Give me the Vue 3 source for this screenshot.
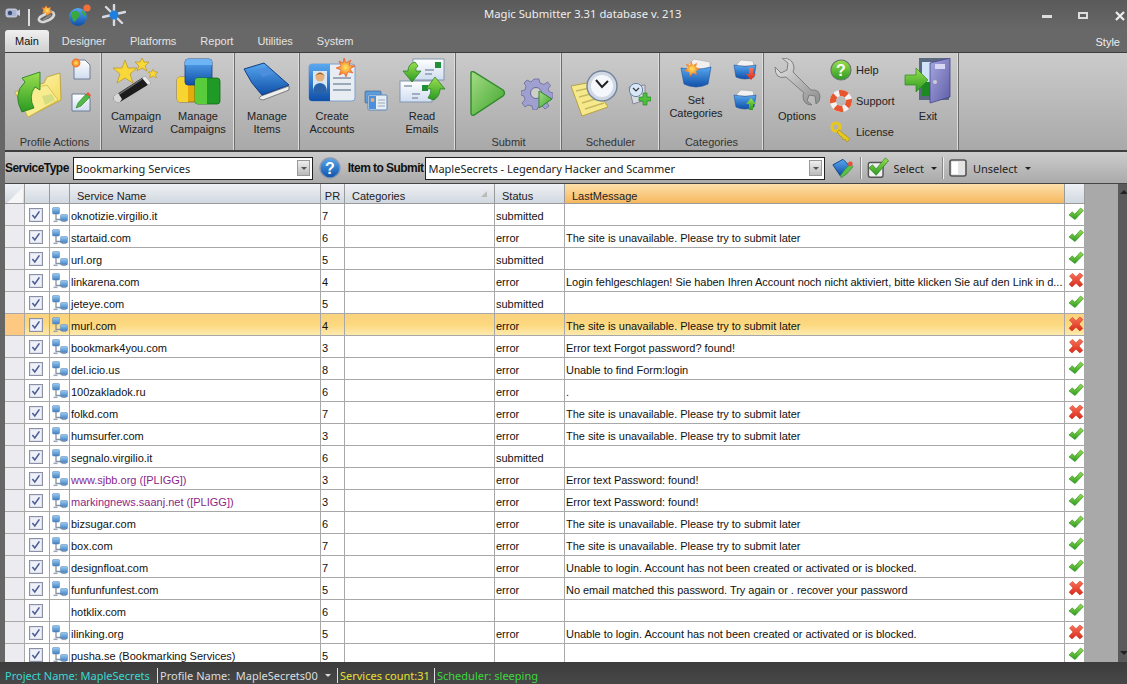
<template>
  <div class="app">
    <!-- shared icons -->
    <svg class="defs" aria-hidden="true">
      <defs>
        <linearGradient id="gGreen" x1="0" y1="0" x2="0" y2="1"><stop offset="0" stop-color="#9be04f"/><stop offset="1" stop-color="#2a9a22"/></linearGradient>
        <linearGradient id="gPlay" x1="0" y1="0" x2="1" y2="1"><stop offset="0" stop-color="#a5dc86"/><stop offset="1" stop-color="#3fa52b"/></linearGradient>
        <linearGradient id="gBlue" x1="0" y1="0" x2="0" y2="1"><stop offset="0" stop-color="#58a8f0"/><stop offset="1" stop-color="#0f4fa8"/></linearGradient>
        <linearGradient id="gNet" x1="0" y1="0" x2="0" y2="1"><stop offset="0" stop-color="#9accf2"/><stop offset="1" stop-color="#3f80c4"/></linearGradient>
        <linearGradient id="gYellow" x1="0" y1="0" x2="1" y2="1"><stop offset="0" stop-color="#fffbc8"/><stop offset="1" stop-color="#f2d64a"/></linearGradient>
        <linearGradient id="gRed" x1="0" y1="0" x2="0" y2="1"><stop offset="0" stop-color="#f9745a"/><stop offset="1" stop-color="#d92a18"/></linearGradient>
        <linearGradient id="gPaper" x1="0" y1="0" x2="0" y2="1"><stop offset="0" stop-color="#ffffff"/><stop offset="1" stop-color="#cfdcf0"/></linearGradient>
        <linearGradient id="gSteel" x1="0" y1="0" x2="1" y2="1"><stop offset="0" stop-color="#e8e8e8"/><stop offset="1" stop-color="#8c8c8c"/></linearGradient>
        <linearGradient id="gDoor" x1="0" y1="0" x2="1" y2="1"><stop offset="0" stop-color="#a8a8e0"/><stop offset="1" stop-color="#5e5ea8"/></linearGradient>
        <radialGradient id="gBurst"><stop offset="0" stop-color="#ffe860"/><stop offset="1" stop-color="#f0641e"/></radialGradient>
      </defs>
      <symbol id="i-ok" viewBox="0 0 16 16">
        <path d="M1 9 L4.3 5.8 L6.8 8.3 L12.6 2 L15.4 4.6 L7 13.6 Z" fill="url(#gGreen)" stroke="#2b8a25" stroke-width=".6"/>
      </symbol>
      <symbol id="i-x" viewBox="0 0 16 16">
        <path d="M1.5 4 L4.6 1.4 L8 4.8 L11.8 1 L15 3.6 L11 8 L14.8 12.4 L11.8 15 L8 11.2 L4 15 L1 12.2 L5 8 Z" fill="url(#gRed)" stroke="#c22a16" stroke-width=".5"/>
      </symbol>
      <symbol id="i-net" viewBox="0 0 16 16">
        <path d="M4 7 V12.5 H9" fill="none" stroke="#8793a2" stroke-width="1.3"/>
        <rect x=".5" y=".5" width="7" height="6.5" rx="1" fill="url(#gNet)" stroke="#5a83b4" stroke-width=".5"/>
        <rect x="8.5" y="7.5" width="7" height="6.5" rx="1" fill="url(#gNet)" stroke="#5a83b4" stroke-width=".5"/>
        <rect x="10" y="13.6" width="4" height="1.5" fill="#9aa4b2"/>
        <rect x="1.5" y="13.6" width="4" height="1.5" fill="#9aa4b2"/>
      </symbol>
      <symbol id="i-check" viewBox="0 0 14 14">
        <rect x=".5" y=".5" width="13" height="13" fill="#dde1ee" stroke="#8b90a4"/>
        <rect x="2" y="2" width="10" height="10" fill="#eff1f8"/>
        <path d="M3.4 7 L5.8 10 L10.4 3.4" fill="none" stroke="#4e5c98" stroke-width="1.6"/>
      </symbol>
      <symbol id="i-box" viewBox="0 0 24 22">
        <path d="M4 6 L8 2 L20 3 L21 8 L4 8 Z" fill="#f2f2f2" stroke="#aaa" stroke-width=".6"/>
        <path d="M1 7 Q12 10 23 7 L21 19 Q12 23 3 19 Z" fill="url(#gBlue)" stroke="#1c4f98" stroke-width=".6"/>
      </symbol>
    </svg>

    <!-- title bar + tabs -->
    <header class="titlebar">
      <div class="qat">
        <svg class="qat-app" width="16" height="14" viewBox="0 0 16 14">
          <rect x="1" y="3" width="11" height="8" rx="2" fill="#a8b4d0" stroke="#dde" stroke-width=".8"/>
          <circle cx="5" cy="7" r="2.2" fill="#3c4a78"/>
          <path d="M12 5 L15 3.5 V10 L12 8.5 Z" fill="#c8d0e4"/>
        </svg>
        <span class="qat-sep"></span>
        <svg width="22" height="22" viewBox="0 0 22 22">
          <path d="M6 18 Q1 17 4 13 L13 8 Q18 7 18 11 Q17 14 13 16 L8 18 Z" fill="none" stroke="#d8d8d8" stroke-width="2.6"/>
          <path d="M7 16 L15 11" stroke="#8a8a8a" stroke-width="1.6"/>
          <path d="M10 1 L11.6 4 L15 3 L14 6.4 L17 8 L14 9.6 L11 12 L9.6 9 L6.4 9 L7.4 6 L5.4 3.6 L8.6 3.8 Z" fill="url(#gBurst)"/>
        </svg>
        <svg width="24" height="24" viewBox="0 0 24 24">
          <circle cx="10" cy="14" r="9" fill="url(#gBlue)"/>
          <path d="M4 9 Q9 6 11 10 Q13 14 9 15 Q8 20 5 18 Q3 13 4 9 Z M13 7 Q18 9 18 14 L15 12 Z" fill="#3aa83a"/>
          <circle cx="19" cy="5" r="3.6" fill="#f0703a"/>
        </svg>
        <svg width="24" height="22" viewBox="0 0 24 22">
          <path d="M12 1 V21 M1 13 L23 8 M4 3 L20 19" stroke="#e4e8f0" stroke-width="2.4" stroke-linecap="round" opacity=".9"/>
          <circle cx="12" cy="11" r="4.5" fill="#1f7fe0"/>
        </svg>
      </div>
      <div class="title">Magic Submitter 3.31 database v. 213</div>
      <div class="winbtns">
        <span class="win-min"></span>
        <span class="win-max"></span>
        <svg class="win-close" width="10" height="10" viewBox="0 0 10 10"><path d="M1 1 L9 9 M9 1 L1 9" stroke="#eee" stroke-width="2.2"/></svg>
      </div>
    </header>
    <nav class="tabs">
      <span v-for="t in tabs" :key="t" class="tab" :class="{ active: t === 'Main' }">{{ t }}</span>
      <span class="style-btn">Style</span>
    </nav>

    <!-- ribbon -->
    <section class="ribbon">
      <div class="group g-profile">
        <div class="body">
          <svg class="ic-folder" width="48" height="48" viewBox="0 0 48 48">
            <path d="M1 22 L30 13 L33 7 L46 3 L47 30 L14 47 Z" fill="url(#gYellow)" stroke="#b89a30" stroke-width=".8"/>
            <path d="M1 22 L33 15 L44 30 L14 47 Z" fill="#f8ec90" stroke="#c8aa38" stroke-width=".6"/>
            <path d="M28 26 L38 24 L41 30 L31 35 Z" fill="#d6dc80"/>
            <path d="M8 42 Q-2 24 11 12 L8 8 L26 2 L26 20 L21 17 Q14 26 20 38 Z" fill="url(#gGreen)" stroke="#1e7a1e" stroke-width=".8"/>
          </svg>
          <div class="stack">
            <svg width="22" height="22" viewBox="0 0 22 22">
              <path d="M4 2 H15 L20 7 V21 H4 Z" fill="url(#gPaper)" stroke="#6c7c98"/>
              <circle cx="6" cy="5" r="4.4" fill="url(#gBurst)"/>
            </svg>
            <svg width="22" height="22" viewBox="0 0 22 22">
              <path d="M2 4 H15 L20 8 V21 H2 Z" fill="url(#gPaper)" stroke="#6c7c98"/>
              <path d="M6 18 L8 13 L16 4 L20 7 L11 16 Z" fill="#52b848" stroke="#2a7a2a" stroke-width=".6"/>
              <path d="M16 4 L18 2 L21 5 L20 7 Z" fill="#e85a3c"/>
            </svg>
          </div>
        </div>
        <div class="glabel">Profile Actions</div>
      </div>

      <div class="group g-campaign">
        <div class="big">
          <svg width="48" height="48" viewBox="0 0 48 48">
            <path d="M2 38 L33 18 L39 25 L8 44 Q0 45 2 38 Z" fill="#1c1c1c"/>
            <path d="M6 37 L30 21" stroke="#777" stroke-width="1.2"/>
            <path d="M30 20 L33 18 L39 25 L36 27 Z" fill="#eaeaea"/>
            <path d="M2 38 L6 35 L10 41 L8 44 Q0 45 2 38 Z" fill="#d8d8d8"/>
            <path d="M13 2 L16 10 L25 10 L18 16 L21 25 L13 20 L5 25 L8 16 L1 10 L10 10 Z" fill="#f8d838" stroke="#b89420" stroke-width=".7"/>
            <path d="M30 0 L32 4 L37 4 L33 8 L35 13 L30 10 L25 13 L27 8 L23 4 L28 4 Z" fill="#f8d838" stroke="#b89420" stroke-width=".7"/>
            <path d="M41 11 L42.5 14 L46 14 L43.5 16.5 L44.5 20 L41 18 L37.5 20 L38.5 16.5 L36 14 L39.5 14 Z" fill="#f8d838" stroke="#b89420" stroke-width=".6"/>
          </svg>
          <span>Campaign<br>Wizard</span>
        </div>
        <div class="big">
          <svg width="48" height="48" viewBox="0 0 48 48">
            <rect x="3" y="19" width="22" height="25" rx="3" fill="#e3ac0c" stroke="#8a6a10" stroke-width=".8"/>
            <path d="M3 22 Q3 19 6 19 H14 V44 H6 Q3 44 3 41 Z" fill="#f8d430"/>
            <rect x="11" y="1" width="27" height="26" rx="3" fill="url(#gBlue)" stroke="#123f8c" stroke-width=".8"/>
            <path d="M11 4 Q11 1 14 1 H35 Q38 1 38 4 V7 H11 Z" fill="#6cb4f4"/>
            <rect x="21" y="20" width="25" height="26" rx="3" fill="#1f9a26" stroke="#116a18" stroke-width=".8"/>
            <path d="M21 23 Q21 20 24 20 H33 V46 H24 Q21 46 21 43 Z" fill="#58cc3a"/>
          </svg>
          <span>Manage<br>Campaigns</span>
        </div>
      </div>

      <div class="group g-items">
        <div class="big">
          <svg width="48" height="48" viewBox="0 0 48 48">
            <path d="M18 38 L46 28 L46 32 L20 42 Q14 41 18 38 Z" fill="#eee" stroke="#666" stroke-width=".8"/>
            <path d="M1 11 L21 5 L46 27 L19 37 Q8 26 1 11 Z" fill="url(#gBlue)" stroke="#103f88"/>
            <path d="M14 12 L24 9 L31 15 L20 19 Z" fill="#4b8fde"/>
          </svg>
          <span>Manage<br>Items</span>
        </div>
      </div>

      <div class="group g-accounts">
        <div class="big">
          <svg width="48" height="48" viewBox="0 0 48 48">
            <rect x="1" y="6" width="46" height="37" rx="3" fill="#e8edf4" stroke="#7ea0c8"/>
            <path d="M1 9 Q1 6 4 6 H22 V43 H4 Q1 43 1 40 Z" fill="url(#gBlue)"/>
            <rect x="5" y="13" width="14" height="22" fill="#d4e6f8"/>
            <circle cx="12" cy="19" r="4.5" fill="#e8b078"/>
            <path d="M7 18 Q12 11 17 18 Q12 14 7 18 Z" fill="#a45a18"/>
            <path d="M5 35 Q5 25 12 25 Q19 25 19 35 Z" fill="#2a62aa"/>
            <path d="M25 20 H43 M25 26 H43 M25 32 H43" stroke="#9aa8b8" stroke-width="2"/>
            <path d="M36 0 L38 5 L43 2 L41 7 L47 8 L42 11 L45 15 L40 14 L38 19 L36 15 L31 17 L33 12 L28 10 L33 8 L31 3 L35 5 Z" fill="url(#gBurst)" stroke="#e84a20" stroke-width=".5"/>
          </svg>
          <span>Create<br>Accounts</span>
        </div>
        <svg class="cards" width="24" height="22" viewBox="0 0 24 22">
          <rect x="1" y="1" width="16" height="12" rx="1" fill="#5a9ee0" stroke="#346" stroke-width=".5"/>
          <rect x="4" y="5" width="19" height="15" rx="1" fill="#e8eef6" stroke="#5a86b8"/>
          <rect x="5" y="6" width="7" height="13" fill="#4a90dc"/>
          <circle cx="8.5" cy="10" r="2" fill="#e8b078"/>
          <path d="M14 10 H21 M14 13 H21 M14 16 H21" stroke="#9aa8b8"/>
        </svg>
        <div class="big">
          <svg width="48" height="48" viewBox="0 0 48 48">
            <rect x="15" y="1" width="31" height="21" fill="url(#gPaper)" stroke="#8496b0"/>
            <rect x="37" y="4" width="6" height="6" fill="#22903a"/>
            <path d="M27 12 H36 M27 16 H34" stroke="#8c9ab0" stroke-width="1.6"/>
            <rect x="2" y="23" width="32" height="21" fill="url(#gPaper)" stroke="#8496b0"/>
            <rect x="24" y="27" width="6" height="6" fill="#22903a"/>
            <path d="M6 28 H14 M14 36 H22 M14 40 H20" stroke="#8c9ab0" stroke-width="1.6"/>
            <path d="M17 4 Q10 6 10 13 H5 L14 24 L23 13 H18 Q17 10 20 8 Z" fill="url(#gGreen)" stroke="#1e7a1e" stroke-width=".7"/>
            <path d="M36 42 Q42 38 42 31 H47 L37 19 L28 31 H33 Q33 36 30 40 Z" fill="url(#gGreen)" stroke="#1e7a1e" stroke-width=".7"/>
          </svg>
          <span>Read<br>Emails</span>
        </div>
      </div>

      <div class="group g-submit">
        <div class="body">
          <svg class="ic-play" width="38" height="47" viewBox="0 0 38 47">
            <path d="M3 3 Q3 1 6 2 L35 20 Q38 23 35 26 L6 45 Q3 46 3 43 Z" fill="url(#gPlay)" stroke="#2f8a2a" stroke-width="1.4"/>
          </svg>
          <svg class="ic-gear" width="32" height="32" viewBox="0 0 32 32">
            <path d="M13 1 H18 L19 5 L23 6.5 L26.5 4 L29.5 7.5 L27 11 L28.5 14 L32 15 V20 L28 21 L26 25 L28 28 L24 31 L21 28 L17 29 L16 32 H12 L11 28 L7 27 L4 29 L1 25 L4 22 L3 18 L0 17 V13 L4 12 L5 8 L3 5 L6 2 L10 4 Z" fill="#a0a0d0" stroke="#6a6a9c" stroke-width=".8"/>
            <circle cx="15" cy="15" r="5.5" fill="#cfcfc9" stroke="#6a6a9c"/>
            <path d="M18 13 L31 21 L18 30 Z" fill="url(#gPlay)" stroke="#2f8a2a"/>
          </svg>
        </div>
        <div class="glabel">Submit</div>
      </div>

      <div class="group g-sched">
        <div class="body">
          <svg class="ic-note" width="48" height="48" viewBox="0 0 48 48">
            <path d="M1 16 L22 12 L38 37 L12 46 Z" fill="#f6e98c" stroke="#b8a040"/>
            <path d="M6 21 L24 17 M9 27 L28 22 M12 33 L32 27 M15 39 L34 33" stroke="#c8b860" stroke-width="1.4"/>
            <circle cx="32" cy="16" r="15" fill="#cfd8e4" stroke="#74849c" stroke-width="1.4"/>
            <circle cx="32" cy="16" r="11" fill="#f4f8fc"/>
            <path d="M26 10 L32 17 L38 11" fill="none" stroke="#222" stroke-width="2"/>
          </svg>
          <svg class="ic-clockplus" width="24" height="24" viewBox="0 0 24 24">
            <path d="M2 5 L18 3 V18 L6 22 Z" fill="#d8dce0" stroke="#889"/>
            <circle cx="9" cy="8" r="6.6" fill="#d8e8f8" stroke="#6a80a0"/>
            <path d="M6 6 L9 9 L12 6" fill="none" stroke="#333" stroke-width="1.2"/>
            <path d="M16 11 H20 V15 H24 V19 H20 V23 H16 V19 H12 V15 H16 Z" fill="#4ec03c" stroke="#1e7a1e" stroke-width=".6"/>
          </svg>
        </div>
        <div class="glabel">Scheduler</div>
      </div>

      <div class="group g-cats">
        <div class="body">
          <div class="big big-top">
            <svg width="32" height="31" viewBox="0 0 32 31">
              <path d="M7 8 L14 1 L30 4 L30 12 L7 12 Z" fill="#f0f0f0" stroke="#aaa" stroke-width=".6"/>
              <path d="M1 10 Q16 13 31 9 L28 26 Q16 32 4 26 Z" fill="url(#gBlue)" stroke="#1c4f98" stroke-width=".6"/>
              <path d="M11 3 L13 7 L17 5 L16 9 L20 11 L16 13 L17 17 L13 15 L10 19 L9 14 L4 13 L8 10 L6 6 L10 7 Z" fill="url(#gBurst)"/>
            </svg>
            <span>Set<br>Categories</span>
          </div>
          <div class="stack stack-cats">
            <span class="arrowbox">
              <svg width="24" height="22"><use href="#i-box"/></svg>
              <svg class="arrow-badge" width="12" height="12" viewBox="0 0 12 12"><path d="M4 0 H8 V6 H11 L6 12 L1 6 H4 Z" fill="url(#gRed)"/></svg>
            </span>
            <span class="arrowbox">
              <svg width="24" height="22"><use href="#i-box"/></svg>
              <svg class="arrow-badge" width="12" height="12" viewBox="0 0 12 12"><path d="M4 12 H8 V6 H11 L6 0 L1 6 H4 Z" fill="url(#gGreen)"/></svg>
            </span>
          </div>
        </div>
        <div class="glabel">Categories</div>
      </div>

      <div class="group g-options">
        <div class="body">
          <div class="big big-opt">
            <svg width="48" height="48" viewBox="0 0 48 48">
              <path d="M2 9 L8 15 L14 12 L15 5 L9 0 Q20 0 21 9 Q21 12 20 14 L38 32 Q47 31 47 39 Q47 44 43 46 L42 38 L36 37 L34 43 L39 47 Q30 47 30 38 Q30 36 31 35 L13 19 Q2 22 2 9 Z" fill="url(#gSteel)" stroke="#777" stroke-width=".9"/>
            </svg>
            <span>Options</span>
          </div>
          <div class="links">
            <div class="link">
              <svg width="22" height="22" viewBox="0 0 22 22">
                <circle cx="11" cy="11" r="10" fill="url(#gGreen)" stroke="#6a7a6a" stroke-width="1.2"/>
                <text x="11" y="16.5" text-anchor="middle" font-family="Liberation Sans, sans-serif" font-weight="700" font-size="16" fill="#fff">?</text>
              </svg>Help
            </div>
            <div class="link">
              <svg width="22" height="22" viewBox="0 0 22 22">
                <circle cx="11" cy="11" r="8" fill="none" stroke="#f2f2f2" stroke-width="6"/>
                <circle cx="11" cy="11" r="8" fill="none" stroke="#e8562e" stroke-width="6" stroke-dasharray="8 4.57" stroke-dashoffset="2"/>
              </svg>Support
            </div>
            <div class="link">
              <svg width="22" height="22" viewBox="0 0 22 22">
                <circle cx="6" cy="6" r="4" fill="none" stroke="#e8c81c" stroke-width="3"/>
                <path d="M9 9 L20 18 L17 21 L15 18 L13 19 L12 16 L10 15 L7 11 Z" fill="#e8c81c" stroke="#a08a10" stroke-width=".6"/>
              </svg>License
            </div>
          </div>
          <div class="big big-exit">
            <svg width="48" height="48" viewBox="0 0 48 48">
              <rect x="15" y="0" width="30" height="42" fill="#5a6880"/>
              <rect x="18" y="4" width="14" height="34" fill="#cfe4f8"/>
              <rect x="18" y="24" width="14" height="14" fill="#1c8a20"/>
              <path d="M26 5 L46 0 V39 L26 45 Z" fill="url(#gDoor)" stroke="#45458a" stroke-width=".8"/>
              <rect x="31" y="6" width="10" height="5" fill="#d8d8f4"/>
              <circle cx="31" cy="24" r="2" fill="#ccc"/>
              <path d="M1 17 H12 V10 L24 22 L12 34 V27 H1 Z" fill="url(#gGreen)" stroke="#2a8a22" stroke-width=".7"/>
            </svg>
            <span>Exit</span>
          </div>
        </div>
      </div>
      <div class="group g-rest"></div>
    </section>

    <!-- filter toolbar -->
    <section class="toolbar">
      <label class="tb-label">ServiceType</label>
      <div class="combo combo-type">
        <span>Bookmarking Services</span>
        <i class="combo-btn"></i>
      </div>
      <svg class="tb-help" width="22" height="22" viewBox="0 0 22 22">
        <circle cx="11" cy="11" r="10" fill="url(#gBlue)" stroke="#8a98b0" stroke-width="1.4"/>
        <text x="11" y="16.5" text-anchor="middle" font-family="Liberation Sans, sans-serif" font-weight="700" font-size="16" fill="#fff">?</text>
      </svg>
      <label class="tb-label">Item to Submit</label>
      <div class="combo combo-item">
        <span>MapleSecrets - Legendary Hacker and Scammer</span>
        <i class="combo-btn"></i>
      </div>
      <svg class="tb-book" width="22" height="21" viewBox="0 0 24 22">
        <path d="M1 7 L12 1 L21 10 L9 19 Z" fill="url(#gBlue)" stroke="#103f88"/>
        <path d="M9 19 L14 12 L20 6 L23 9 L16 17 L10 21 Z" fill="#5ac04a" stroke="#2a7a2a" stroke-width=".6"/>
        <circle cx="20" cy="6" r="2.6" fill="#e8503c"/>
      </svg>
      <span class="tb-sep"></span>
      <button class="tb-btn">
        <svg width="22" height="22" viewBox="0 0 24 24">
          <rect x="1.5" y="6" width="16" height="16" rx="2" fill="#f0f0f0" stroke="#555" stroke-width="1.6"/>
          <path d="M2 12 L6 8.5 L10 13 L20 1 L23.5 4 L10 20 Z" fill="url(#gGreen)" stroke="#1e7a1e" stroke-width=".7"/>
        </svg>
        <span class="tb-text">Select</span><i class="caret"></i>
      </button>
      <span class="tb-sep"></span>
      <button class="tb-btn unsel">
        <svg width="18" height="18" viewBox="0 0 18 18">
          <rect x="1" y="1" width="16" height="16" rx="2" fill="#e4e4e4" stroke="#555" stroke-width="1.6"/>
          <rect x="3" y="3" width="6" height="12" fill="#fff"/>
        </svg>
        <span class="tb-text">Unselect</span><i class="caret"></i>
      </button>
    </section>

    <!-- grid -->
    <main class="grid-wrap">
      <div class="grid">
        <table>
          <colgroup>
            <col style="width:20px"><col style="width:25px"><col style="width:20px"><col style="width:251px">
            <col style="width:24px"><col style="width:150px"><col style="width:70px"><col style="width:500px"><col style="width:20px">
          </colgroup>
          <thead>
            <tr>
              <th class="corner"><i></i></th>
              <th></th><th></th>
              <th class="pad">Service Name</th>
              <th class="c">PR</th>
              <th class="pad cat">Categories<i class="sort"></i></th>
              <th class="pad">Status</th>
              <th class="pad sorted">LastMessage</th>
              <th></th>
            </tr>
          </thead>
          <tbody>
            <tr v-for="r in rows" :key="r.name" :class="{ current: r.current }">
              <td class="rowhead"></td>
              <td class="ck"><svg width="14" height="14"><use href="#i-check"/></svg></td>
              <td class="ico"><svg v-if="!r.noIcon" width="16" height="16"><use href="#i-net"/></svg></td>
              <td class="name" :class="{ pligg: r.pligg }">{{ r.name }}</td>
              <td>{{ r.pr }}</td>
              <td></td>
              <td>{{ r.status }}</td>
              <td class="msg">{{ r.msg }}</td>
              <td class="res"><svg width="16" height="16"><use :href="r.failed ? '#i-x' : '#i-ok'"/></svg></td>
            </tr>
          </tbody>
        </table>
      </div>
      <div class="scrollbar">
        <i class="up"></i>
        <i class="down"></i>
      </div>
    </main>

    <!-- status bar -->
    <footer class="statusbar">
      <span class="st-project">Project Name: MapleSecrets</span>
      <span class="st-profile">Profile Name:&nbsp;&nbsp;MapleSecrets00<i class="caret light"></i></span>
      <span class="st-count">Services count:31</span>
      <span class="st-sched">Scheduler: sleeping</span>
    </footer>
  </div>
</template>

<script setup>
const tabs = ['Main', 'Designer', 'Platforms', 'Report', 'Utilities', 'System']

const unavailable = 'The site is unavailable. Please try to submit later'
const noLogin = 'Unable to login. Account has not been created or activated or is blocked.'

const rows = [
  { name: 'oknotizie.virgilio.it', pr: 7, status: 'submitted', msg: '' },
  { name: 'startaid.com', pr: 6, status: 'error', msg: unavailable },
  { name: 'url.org', pr: 5, status: 'submitted', msg: '' },
  { name: 'linkarena.com', pr: 4, status: 'error', msg: 'Login fehlgeschlagen! Sie haben Ihren Account noch nicht aktiviert, bitte klicken Sie auf den Link in d...', failed: true },
  { name: 'jeteye.com', pr: 5, status: 'submitted', msg: '' },
  { name: 'murl.com', pr: 4, status: 'error', msg: unavailable, failed: true, current: true },
  { name: 'bookmark4you.com', pr: 3, status: 'error', msg: 'Error text Forgot password? found!', failed: true },
  { name: 'del.icio.us', pr: 8, status: 'error', msg: 'Unable to find Form:login' },
  { name: '100zakladok.ru', pr: 6, status: 'error', msg: '.' },
  { name: 'folkd.com', pr: 7, status: 'error', msg: unavailable, failed: true },
  { name: 'humsurfer.com', pr: 3, status: 'error', msg: unavailable },
  { name: 'segnalo.virgilio.it', pr: 6, status: 'submitted', msg: '' },
  { name: 'www.sjbb.org ([PLIGG])', pr: 3, status: 'error', msg: 'Error text Password: found!', pligg: true },
  { name: 'markingnews.saanj.net ([PLIGG])', pr: 3, status: 'error', msg: 'Error text Password: found!', pligg: true },
  { name: 'bizsugar.com', pr: 6, status: 'error', msg: unavailable },
  { name: 'box.com', pr: 7, status: 'error', msg: unavailable },
  { name: 'designfloat.com', pr: 7, status: 'error', msg: noLogin },
  { name: 'funfunfunfest.com', pr: 5, status: 'error', msg: 'No email matched this password. Try again or . recover your password', failed: true },
  { name: 'hotklix.com', pr: 6, status: '', msg: '', noIcon: true },
  { name: 'ilinking.org', pr: 5, status: 'error', msg: noLogin, failed: true },
  { name: 'pusha.se (Bookmarking Services)', pr: 5, status: '', msg: '' }
]
</script>

<style>
html, body { margin: 0; background: #555; }
</style>

<style scoped>
.app { width: 1127px; height: 684px; overflow: hidden; display: flex; flex-direction: column; background: #666; font-family: "Liberation Sans", Arial, sans-serif; font-size: 11px; color: #111; }
.defs { position: absolute; width: 0; height: 0; }

/* title */
.titlebar { height: 30px; display: flex; align-items: flex-start; background: linear-gradient(#5a5a5a, #686868); color: #eee; flex-shrink: 0; }
.qat { width: 130px; height: 30px; display: flex; align-items: center; padding-left: 5px; box-sizing: border-box; }
.qat-app { margin-top: -4px; }
.qat-sep { width: 2px; height: 17px; background: #ddd; margin: 4px 6px 0 7px; }
.qat svg + svg { margin-left: 10px; }
.qat-sep + svg { margin-left: 0; }
.title { margin-left: 354px; line-height: 27px; font-size: 11.25px; font-family: "Noto Sans", sans-serif; white-space: nowrap; }
.winbtns { margin-left: auto; display: flex; align-items: center; height: 30px; padding-right: 2px; }
.win-min { width: 10px; height: 3px; background: #ddd; margin-right: 26px; margin-top: 3px; }
.win-max { width: 6px; height: 3px; border: 2px solid #ddd; margin-right: 27px; box-sizing: content-box; margin-top: 1px; }
.win-close { margin-top: 1px; }

.tabs { height: 22px; display: flex; background: #686868; color: #e4e4e4; padding-left: 5px; flex-shrink: 0; font-size: 11px; }
.tab { padding: 0 12px; line-height: 23px; }
.tab.active { background: linear-gradient(#f0f0f0, #d0d0d0); color: #111; border-radius: 3px 3px 0 0; padding: 0 10px; margin-right: 1px; }
.style-btn { margin-left: auto; margin-right: 7px; line-height: 24px; color: #eee; }

/* ribbon */
.ribbon { height: 98px; margin-left: 5px; display: flex; background: linear-gradient(#cbcbcb, #a9a9a9); border-top: 1px solid #3e3e3e; box-sizing: border-box; flex-shrink: 0; font-size: 11px; }
.group { display: flex; flex-direction: row; flex-wrap: wrap; align-content: flex-start; border-right: 1px solid #6e6e6e; box-sizing: border-box; height: 97px; box-shadow: inset -1px 0 0 #ddd; }
.body { display: flex; width: 100%; height: 82px; }
.glabel { width: 100%; text-align: center; line-height: 15px; color: #333; }
.big { display: flex; flex-direction: column; align-items: center; padding-top: 5px; line-height: 13px; text-align: center; color: #222; }
.big svg { margin-bottom: 4px; }
.stack { display: flex; flex-direction: column; gap: 10px; padding-top: 5px; }

.g-profile { width: 97px; }
.g-profile .glabel { padding-left: 3px; box-sizing: border-box; }
.ic-folder { margin: 17px 8px 0 9px; }
.g-campaign { width: 133px; padding-left: 3px; flex-wrap: nowrap; }
.g-campaign .big { width: 62px; }
.g-items { width: 65px; }
.g-items .big { width: 64px; }
.g-accounts { width: 156px; padding-left: 2px; flex-wrap: nowrap; }
.g-accounts .big { width: 60px; }
.cards { margin: 37px 4px 0 2px; }
.g-submit { width: 106px; }
.ic-play { margin: 17px 15px 0 12px; }
.ic-gear { margin-top: 25px; }
.g-sched { width: 98px; }
.ic-note { margin: 17px 9px 0 8px; }
.ic-clockplus { margin-top: 29px; }
.g-cats { width: 104px; }
.g-cats .big-top { width: 72px; padding-top: 5px; }
.big-top svg { margin-bottom: 5px; }
.stack-cats { margin-left: 1px; gap: 8px; padding-top: 5px; }
.arrowbox { position: relative; display: block; width: 24px; height: 22px; }
.arrow-badge { position: absolute; right: 0; bottom: 0; }
.g-options { width: 195px; }
.g-options .body { height: 96px; }
.big-opt { width: 66px; }
.links { display: flex; flex-direction: column; gap: 9px; padding-top: 6px; }
.link { display: flex; align-items: center; gap: 4px; height: 22px; width: 74px; color: #222; }
.big-exit { width: 48px; }
.g-rest { flex: 1; border-right: 0; box-shadow: none; }

/* toolbar */
.toolbar { height: 34px; margin-left: 5px; padding-top: 1px; box-sizing: border-box; display: flex; align-items: center; background: linear-gradient(#ccc, #aaa); border-top: 2px solid #3e3e3e; border-bottom: 1px solid #444; flex-shrink: 0; }
.tb-label { font-weight: 700; font-size: 12px; letter-spacing: -0.55px; color: #111; margin-right: 3px; }
.combo { height: 23px; background: #fff; border: 1px solid #222; box-sizing: border-box; display: flex; align-items: center; justify-content: space-between; padding: 0 2px; font-family: "Noto Sans", sans-serif; font-size: 11px; color: #222; }
.combo-type { width: 240px; margin-left: 1px; }
.combo-item { width: 400px; margin-left: -1px; }
.combo-btn { width: 13px; height: 16px; background: linear-gradient(#eee, #bbb); border: 1px solid #999; position: relative; box-sizing: border-box; }
.combo-btn::after { content: ""; position: absolute; left: 3px; top: 6px; border: 3px solid transparent; border-top-color: #555; }
.tb-help { margin: 0 7px 0 6px; }
.tb-book { margin: 0 2px 0 7px; }
.tb-sep { width: 1px; height: 22px; background: #eee; border-left: 1px solid #888; margin: 0 5px 0 4px; }
.tb-btn { display: flex; align-items: center; border: 0; background: none; padding: 0; font: inherit; color: #222; }
.tb-text { font-family: "Noto Sans", sans-serif; font-size: 11px; margin-left: 4px; }
.unsel .tb-text { margin-left: 6px; }
.caret { display: inline-block; border: 3px solid transparent; border-top-color: #222; margin: 3px 1px 0 7px; }
.caret.light { border-top-color: #ddd; }

/* grid */
.grid-wrap { flex: 1; min-height: 0; display: flex; background: #a9a9a9; padding-left: 5px; position: relative; box-shadow: inset 5px 0 0 #666; }
.grid { width: 1113px; overflow: hidden; }
table { border-collapse: separate; border-spacing: 0; table-layout: fixed; width: 1080px; background: #fff; }
th { height: 20px; padding: 4px 0 0; font-weight: 400; text-align: left; background: linear-gradient(#eef1f5, #d2d8e0); border-right: 1px solid #9a9a9a; border-bottom: 1px solid #9a9a9a; box-sizing: border-box; color: #222; position: relative; }
th.pad { padding-left: 7px; }
th.c { text-align: center; }
th.sorted { background: linear-gradient(#fde0aa, #f6b860); }
.corner i { position: absolute; left: 2px; top: 3px; border: 8px solid transparent; border-right-color: #f6f6f6; border-bottom-color: #f6f6f6; }
.sort { position: absolute; right: 7px; top: 7px; border: 3px solid transparent; border-bottom-color: #bbb; border-right-color: #bbb; }
td { height: 22px; padding: 2px 0 0 1px; border-right: 1px solid #a8a8a8; border-bottom: 1px solid #a8a8a8; box-sizing: border-box; white-space: nowrap; overflow: hidden; color: #111; }
td svg { display: block; }
.rowhead { background: #ececf0; }
.ck { padding: 1px 2px 0 0; }
.ck svg { margin: 0 auto; }
.ico { padding: 0 0 0 2px; }
.res { padding: 0 0 1px 3px; }
.name { padding-left: 1px; }
.msg { letter-spacing: -0.03px; }
.pligg { color: #8a1f8a; }
tr.current td { background: linear-gradient(#fbd27e, #fcd87e 50%, #fde9ae); }
tr.current td.rowhead { background: #fdc882; }

.scrollbar { flex: 1; background: #5a5a5a; position: relative; }
.scrollbar i { position: absolute; left: 2px; border: 4px solid transparent; }
.up { top: 2px; border-bottom-color: #222 !important; }
.down { bottom: 3px; border-top-color: #222 !important; }

/* status */
.statusbar { height: 22px; display: flex; align-items: center; background: linear-gradient(#3c3c3c, #474747); font-family: "Noto Sans", sans-serif; font-size: 11px; padding-left: 5px; padding-top: 4px; box-sizing: border-box; flex-shrink: 0; }
.statusbar span { white-space: nowrap; box-sizing: border-box; }
.statusbar span + span { border-left: 1px solid #ddd; padding-left: 2px; }
.st-project { color: #38d8d0; width: 152px; }
.st-profile { color: #ddd; width: 180px; }
.st-count { color: #e8e030; width: 97px; }
.st-sched { color: #3cd83c; }
</style>
